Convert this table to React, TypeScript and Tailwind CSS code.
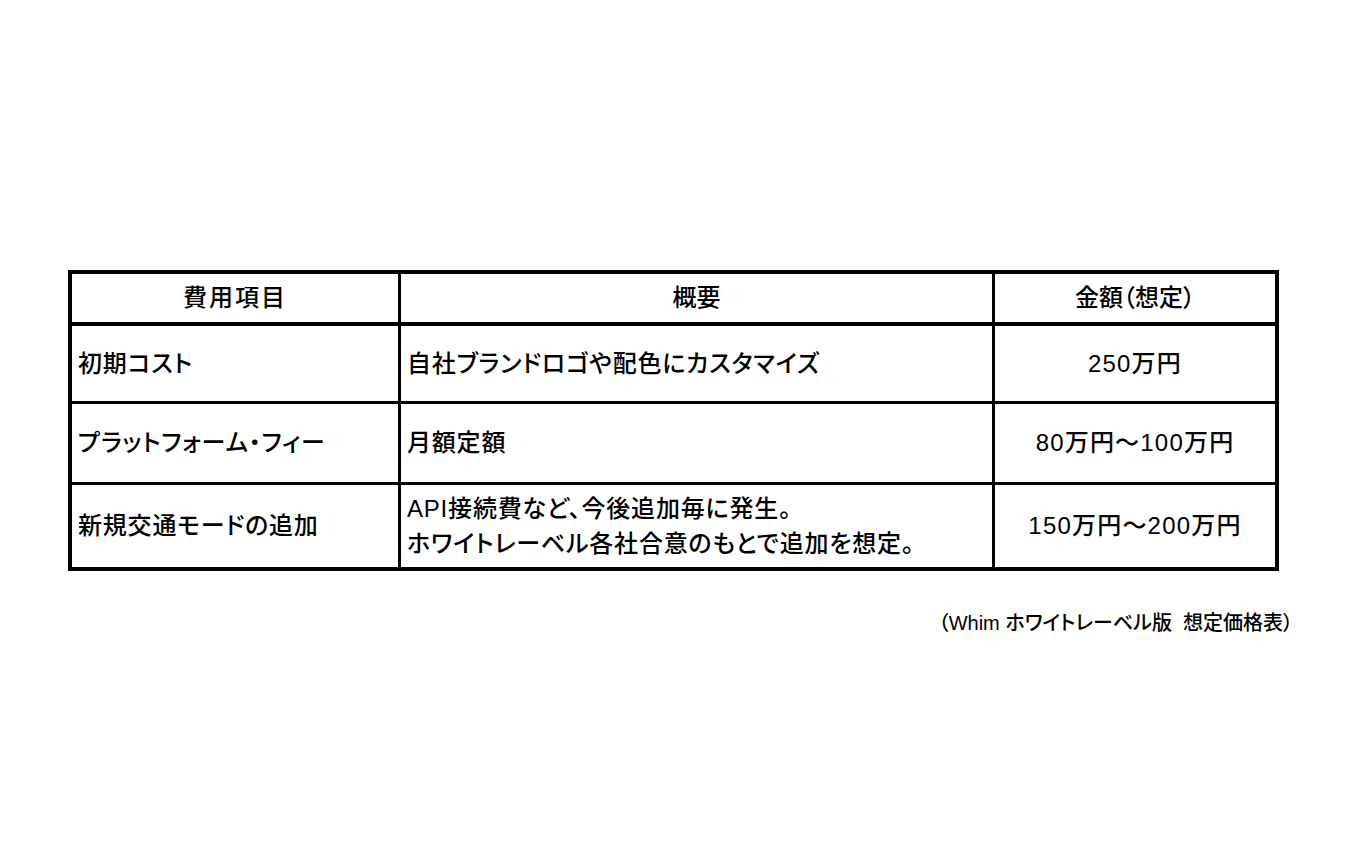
import React from 'react'

const font = "font-['Liberation_Sans','Noto_Sans_CJK_JP',sans-serif] font-medium [font-feature-settings:'palt']"

function App() {
  return (
    <div className={`min-h-[844px] bg-white pt-[270px] pl-[68px] text-black ${font}`}>
      {/* Price table */}
      <div className="w-[1211px] border-[4px] border-black">
        {/* Header */}
        <div className="flex h-[52px] border-b-[4px] border-black text-[24px]">
          <div className="w-[326px] flex items-center justify-center tracking-[2px]">費用項目</div>
          <div className="w-[594px] border-l-[3px] border-black flex items-center justify-center">概要</div>
          <div className="flex-1 border-l-[3px] border-black flex items-center justify-center">金額（想定）</div>
        </div>

        {/* Row 1 */}
        <div className="flex h-[78px] border-b-[3px] border-black text-[24px] tracking-[0.8px]">
          <div className="w-[326px] flex items-center pl-[6px]">初期コスト</div>
          <div className="w-[594px] border-l-[3px] border-black flex items-center pl-[6px]">自社ブランドロゴや配色にカスタマイズ</div>
          <div className="flex-1 border-l-[3px] border-black flex items-center justify-center tracking-[1.2px]">250万円</div>
        </div>

        {/* Row 2 */}
        <div className="flex h-[81px] border-b-[3px] border-black text-[24px] tracking-[0.8px]">
          <div className="w-[326px] flex items-center pl-[6px]">プラットフォーム・フィー</div>
          <div className="w-[594px] border-l-[3px] border-black flex items-center pl-[6px]">月額定額</div>
          <div className="flex-1 border-l-[3px] border-black flex items-center justify-center tracking-[1.2px]">80万円～100万円</div>
        </div>

        {/* Row 3 */}
        <div className="flex h-[82px] text-[24px] tracking-[0.8px]">
          <div className="w-[326px] flex items-center pl-[6px]">新規交通モードの追加</div>
          <div className="w-[594px] border-l-[3px] border-black flex flex-col justify-center pl-[6px] leading-[35px]">
            <p>API接続費など、今後追加毎に発生。</p>
            <p>ホワイトレーベル各社合意のもとで追加を想定。</p>
          </div>
          <div className="flex-1 border-l-[3px] border-black flex items-center justify-center tracking-[1.2px]">150万円～200万円</div>
        </div>
      </div>

      {/* Caption */}
      <div className="w-[1225px] mt-[37px] text-right text-[20px] leading-[30px]">
        （Whim ホワイトレーベル版&nbsp;&nbsp;想定価格表）
      </div>
    </div>
  )
}

export default App
